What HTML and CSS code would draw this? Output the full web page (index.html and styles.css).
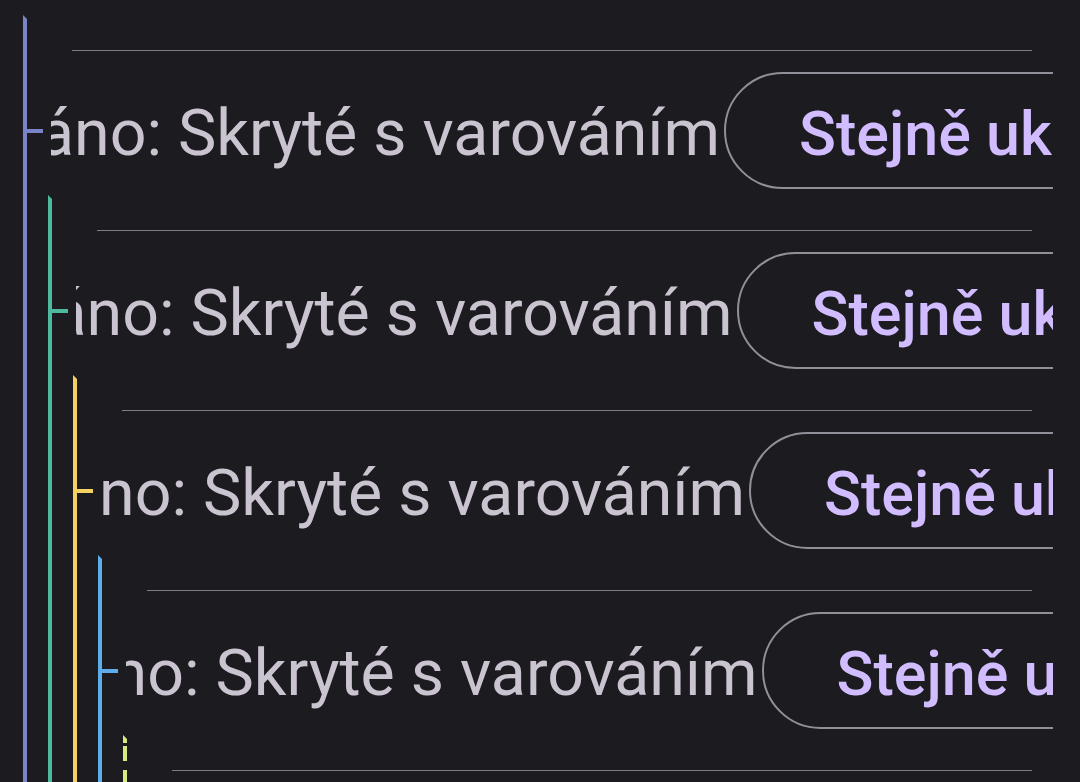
FILE: index.html
```html
<!DOCTYPE html>
<html lang="cs">
<head>
<meta charset="utf-8">
<title>Vlákno</title>
<link rel="stylesheet" href="styles.css">
</head>
<body>
<div class="viewport">
  <div class="thread c1">
    <div class="item">
      <div class="divider"></div>
      <div class="row">
        <span class="tick"></span>
        <div class="label"><span>Filtrováno: Skryté s varováním</span></div>
        <div class="btn"><span>Stejně ukázat</span></div>
      </div>
    </div>
    <div class="thread c2">
      <div class="item">
        <div class="divider"></div>
        <div class="row">
          <span class="tick"></span>
          <div class="label"><span>Filtrováno: Skryté s varováním</span></div>
          <div class="btn"><span>Stejně ukázat</span></div>
        </div>
      </div>
      <div class="thread c3">
        <div class="item">
          <div class="divider"></div>
          <div class="row">
            <span class="tick"></span>
            <div class="label"><span>Filtrováno: Skryté s varováním</span></div>
            <div class="btn"><span>Stejně ukázat</span></div>
          </div>
        </div>
        <div class="thread c4">
          <div class="item">
            <div class="divider"></div>
            <div class="row">
              <span class="tick"></span>
              <div class="label"><span>Filtrováno: Skryté s varováním</span></div>
              <div class="btn"><span>Stejně ukázat</span></div>
            </div>
          </div>
          <div class="thread c5">
            <div class="item">
              <div class="divider"></div>
              <div class="row">
                <span class="tick"></span>
                <div class="label"><span>Filtrováno: Skryté s varováním</span></div>
                <div class="btn"><span>Stejně ukázat</span></div>
              </div>
            </div>
          </div>
        </div>
      </div>
    </div>
  </div>
</div>
</body>
</html>
```

FILE: styles.css
```css
* { box-sizing: border-box; }
html, body { margin: 0; height: 100%; }
body {
  background: #1c1b1f;
  overflow: hidden;
  font-family: Roboto, "Noto Sans", sans-serif;
}
.viewport {
  width: 1053px;
  height: 782px;
  overflow: hidden;
  padding: 15px 0 0 23px;
}
.thread {
  position: relative;
  padding-left: 4px;
  --c: #7b84c6;
}
.thread::before {
  content: "";
  position: absolute;
  left: 0;
  top: 0;
  bottom: 0;
  width: 4px;
  background: var(--c);
  clip-path: polygon(0 0, 100% 4px, 100% 100%, 0 100%);
}
.thread .thread { margin-left: 21px; }
.c1 { --c: #7b84c6; }
.c2 { --c: #4fb9a0; }
.c3 { --c: #f3d163; }
.c4 { --c: #5cadea; }
.c5 { --c: #d6ec7e; }
.c5::before {
  background: linear-gradient(to bottom,
    var(--c) 0 8px, transparent 8px 11px,
    var(--c) 11px 26px, transparent 26px 35px,
    var(--c) 35px 60px, transparent 60px 69px,
    var(--c) 69px 94px, transparent 94px);
}
.item {
  height: 180px;
  padding-top: 35px;
}
.divider {
  height: 1px;
  background: #7f7c84;
  margin-left: 45px;
  margin-right: 21px;
}
.row {
  display: flex;
  align-items: center;
  height: 117px;
  margin-top: 21px;
  margin-right: -344px;
}
.tick {
  flex: none;
  width: 16px;
  height: 4px;
  background: var(--c);
  margin-right: 8px;
}
.label {
  flex: 1 1 0;
  min-width: 0;
  overflow: hidden;
  display: flex;
  justify-content: flex-end;
  white-space: nowrap;
  padding-top: 5px;
  padding-right: 4px;
  color: #cac4d0;
  font-size: 64.5px;
}
.btn {
  flex: none;
  width: calc(50% - 12px);
  height: 117px;
  border: 2.5px solid #938f99;
  border-radius: 60px;
  display: flex;
  align-items: center;
  padding-left: 73px;
  padding-top: 7px;
  color: #d0bcff;
  font-weight: 500;
  font-size: 61px;
  letter-spacing: 0;
  white-space: nowrap;
}
```
